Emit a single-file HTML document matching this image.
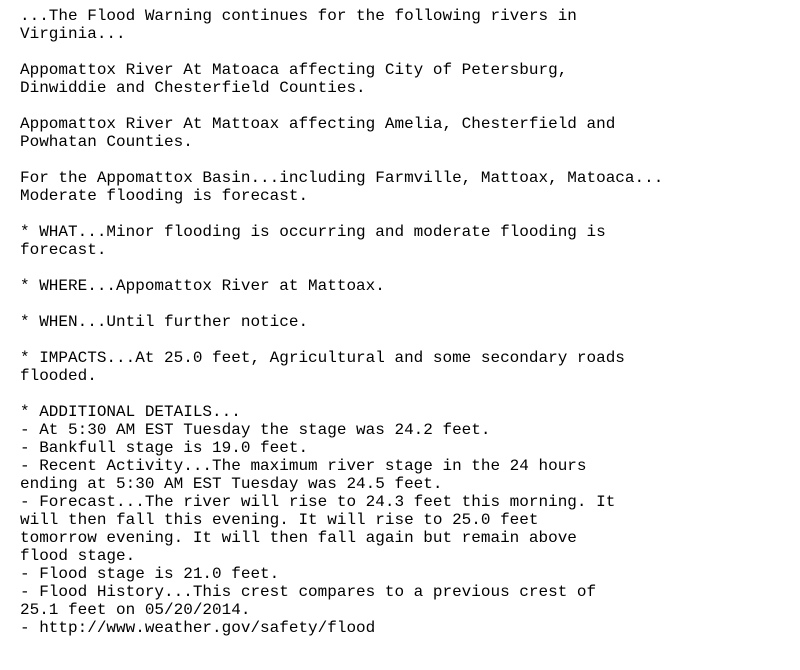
<!DOCTYPE html>
<html><head><meta charset="utf-8"><style>
html,body{margin:0;padding:0;background:#fff;width:800px;height:670px;overflow:hidden}
pre{position:absolute;left:20px;top:7px;margin:0;font-family:"Liberation Mono",monospace;font-size:16px;line-height:18px;color:#000}
</style></head><body><pre>...The Flood Warning continues for the following rivers in
Virginia...

Appomattox River At Matoaca affecting City of Petersburg,
Dinwiddie and Chesterfield Counties.

Appomattox River At Mattoax affecting Amelia, Chesterfield and
Powhatan Counties.

For the Appomattox Basin...including Farmville, Mattoax, Matoaca...
Moderate flooding is forecast.

* WHAT...Minor flooding is occurring and moderate flooding is
forecast.

* WHERE...Appomattox River at Mattoax.

* WHEN...Until further notice.

* IMPACTS...At 25.0 feet, Agricultural and some secondary roads
flooded.

* ADDITIONAL DETAILS...
- At 5:30 AM EST Tuesday the stage was 24.2 feet.
- Bankfull stage is 19.0 feet.
- Recent Activity...The maximum river stage in the 24 hours
ending at 5:30 AM EST Tuesday was 24.5 feet.
- Forecast...The river will rise to 24.3 feet this morning. It
will then fall this evening. It will rise to 25.0 feet
tomorrow evening. It will then fall again but remain above
flood stage.
- Flood stage is 21.0 feet.
- Flood History...This crest compares to a previous crest of
25.1 feet on 05/20/2014.
- http://www.weather.gov/safety/flood</pre></body></html>
